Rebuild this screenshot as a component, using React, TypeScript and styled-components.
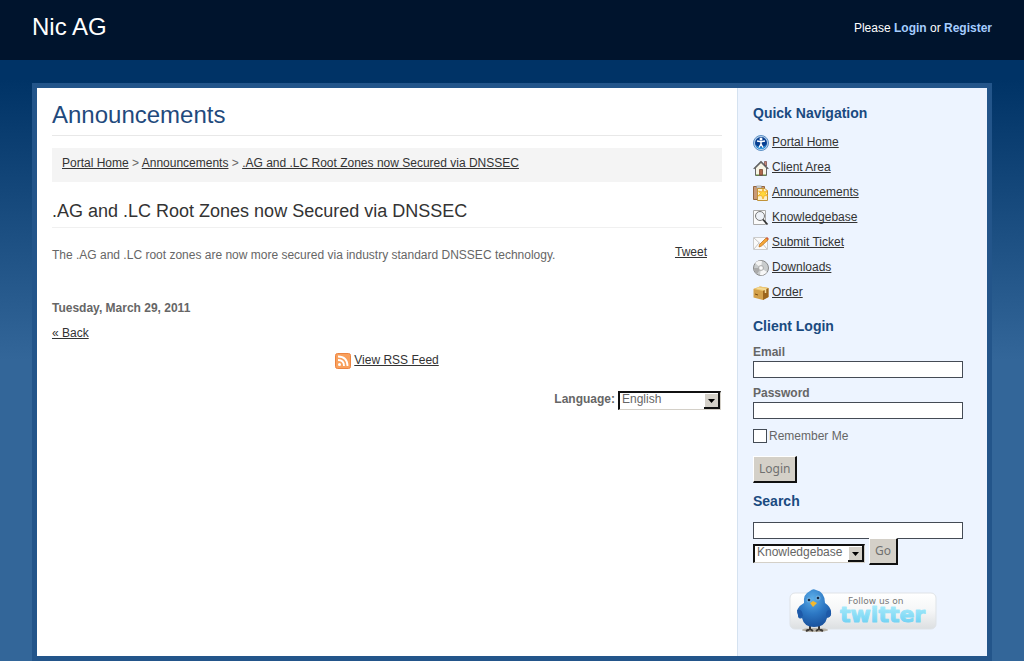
import React from 'react';
import styled, { createGlobalStyle } from 'styled-components';

const GlobalStyle = createGlobalStyle`
  * { box-sizing: border-box; }
  html { min-height: 100%; background: #336699; }
  body {
    margin: 0;
    font: 12px/18px "Liberation Sans", Arial, sans-serif;
    color: #666;
    background: linear-gradient(#003366 80px, #336699 360px) no-repeat;
  }
`;

const Header = styled.header`
  display: flex;
  justify-content: space-between;
  align-items: center;
  height: 60px;
  padding: 0 32px 4px;
  background: #00142d;
  color: #fff;
`;

const SiteName = styled.div`
  font-size: 24px;
  line-height: 30px;
  padding-bottom: 2px;
`;

const AccountLink = styled.a`
  color: #a5cdff;
  font-weight: bold;
  text-decoration: none;
`;

const Frame = styled.div`
  display: flex;
  min-height: 578px;
  margin: 23px 32px 0;
  border: 5px solid #23558a;
  background: #fff;
`;

const Main = styled.main`
  flex: 1;
  padding: 12px 15px;
`;

const Sidebar = styled.aside`
  width: 250px;
  padding: 16px 14px 16px 15px;
  background: #edf4ff;
  border-left: 1px solid #d5e2f0;
`;

const PageTitle = styled.h1`
  margin: 0 0 12px;
  padding-bottom: 5px;
  border-bottom: 1px solid #e8e8e8;
  color: #1f4a7d;
  font-size: 24px;
  line-height: 30px;
  font-weight: normal;
`;

const Breadcrumb = styled.nav`
  height: 34px;
  padding: 6px 10px;
  background: #f4f4f4;
`;

const TextLink = styled.a`
  color: #333;
  text-decoration: underline;
  text-underline-offset: 1px;
  text-decoration-skip-ink: none;
`;

const ArticleTitle = styled.h2`
  margin: 17px 0 15px;
  padding-bottom: 3px;
  border-bottom: 1px solid #f0f0f0;
  color: #333;
  font-size: 18px;
  line-height: 25px;
  font-weight: normal;
`;

const ArticleBody = styled.div`
  display: flex;
  justify-content: space-between;
  align-items: flex-start;
  padding-right: 15px;
`;

const ArticleText = styled.p`
  margin: 3px 0 35px;
`;

const DateLine = styled.p`
  margin: 0 0 7px;
  font-weight: bold;
`;

const FeedLine = styled.p`
  display: flex;
  justify-content: center;
  gap: 3px;
  margin: 9px 0 21px;
`;

const LanguageForm = styled.form`
  display: flex;
  justify-content: flex-end;
  gap: 3px;
  padding-right: 1px;
`;

const BoldLabel = styled.label`
  display: block;
  font-weight: bold;
`;

const SelectBox = styled.span<{ $width: number }>`
  position: relative;
  display: block;
  width: ${(p) => p.$width}px;
  height: 19px;
  margin-top: 1px;
  border: 1px solid #d4d0c8;
  border-top: 2px solid #111;
  border-left: 2px solid #111;
  background: #fff;
`;

const NativeSelect = styled.select`
  display: block;
  width: 100%;
  height: 13px;
  padding: 0 0 0 2px;
  border: 0;
  appearance: none;
  background: transparent;
  color: #666;
  font: inherit;
  line-height: 13px;
`;

const SelectArrow = styled.svg`
  position: absolute;
  top: 0;
  right: 0;
  pointer-events: none;
`;

const SideTitle = styled.h2`
  margin: 0;
  color: #1a4a80;
  font-size: 14px;
  line-height: 18px;
`;

const NavList = styled.ul`
  list-style: none;
  margin: 9px 0 11px;
  padding: 0;
`;

const NavItem = styled.li`
  display: flex;
  gap: 3px;
  height: 25px;
  padding-top: 2px;
  line-height: 18px;
`;

const Icon = styled.svg`
  flex: none;
  display: block;
  margin-top: 2px;
`;

const LoginForm = styled.form`
  margin: 8px 0 9px;
`;

const TextInput = styled.input`
  display: block;
  width: 210px;
  height: 17px;
  margin-bottom: 6px;
  padding: 0 2px;
  border: 1px solid #444b55;
  border-radius: 0;
  background: #fff;
  font: inherit;
`;

const CheckLabel = styled.label`
  display: flex;
  align-items: center;
  gap: 2px;
  margin: 8px 0 11px;
`;

const CheckInput = styled.input`
  appearance: none;
  width: 14px;
  height: 14px;
  margin: 0;
  border: 1px solid #444b55;
  background: #fff;

  &:checked { background: #444b55; }
`;

const PushButton = styled.button`
  height: 27px;
  padding: 0 5px;
  border: 1px solid #fff;
  border-right: 2px solid #111;
  border-bottom: 2px solid #111;
  background: #d4d0c8;
  color: #707070;
  font: 12px/20px "Noto Sans", "Open Sans", sans-serif;
`;

const SearchForm = styled.form`
  margin-top: 12px;
  ${TextInput} { margin: 0; }
`;

const SearchRow = styled.div`
  display: flex;
  align-items: flex-start;
  gap: 4px;
  ${SelectBox} { margin-top: 5px; }
  ${PushButton} { position: relative; margin-top: -1px; }
`;

const TwitterLink = styled.a`
  display: block;
  width: 150px;
  margin: 23px auto 0;
  svg { display: block; }
`;

function Select({ id, width, label, options }: { id: string; width: number; label?: string; options: string[] }) {
  return (
    <SelectBox $width={width}>
      <NativeSelect id={id} aria-label={label}>
        {options.map((o) => <option key={o}>{o}</option>)}
      </NativeSelect>
      <SelectArrow width="16" height="16" viewBox="0 0 16 16" aria-hidden="true">
        <path d="M0 0H16V16H0Z" fill="#111" />
        <path d="M0 0H14V14H0Z" fill="#fff" />
        <path d="M1 1H14V14H1Z" fill="#d4d0c8" />
        <path d="M4 6H11L7.500 10Z" fill="#000" />
      </SelectArrow>
    </SelectBox>
  );
}

const icons: Record<string, React.ReactNode> = {
  home: (
    <>
      <circle cx="8" cy="8" r="7.500" fill="#b9d2ec" stroke="#5b8fc5" />
      <circle cx="8" cy="8" r="6" fill="#083f91" />
      <path d="M3 10Q8 15 13 10Q12 14 8 14T3 10" fill="#2fa0e8" />
      <circle cx="8" cy="4" r="1.500" fill="#fff" />
      <path d="M4 6L7 6.500H9L12 6M8 6.500V9L6 12.500M8 9L10 12.500" stroke="#fff" strokeWidth="1.500" fill="none" />
    </>
  ),
  client: (
    <>
      <path d="M11.500 1.500H13.500V6H11.500Z" fill="#c98a78" stroke="#633" strokeWidth=".6" />
      <path d="M2.500 8L8 2.500L13.500 8V15.500H2.500Z" fill="#f8f5e6" stroke="#666" />
      <path d="M.7 8.800L8 1.500L15.300 8.800" fill="none" stroke="#555" strokeWidth="1.200" />
      <path d="M6.500 9.500H9.500V15H6.500Z" fill="#b0674c" stroke="#6d3925" strokeWidth=".7" />
      <path d="M3 15H6M10 15H13" stroke="#66933e" />
    </>
  ),
  news: (
    <>
      <path d="M.5 1.500H11.500V14.500H.5Z" fill="#c99a78" stroke="#94663f" />
      <path d="M3.500 1H8.500V3H3.500Z" fill="#ddd" stroke="#888" strokeWidth=".6" />
      <path d="M4.500 3.500H12L14.500 6V15.500H4.500Z" fill="#fbf0c8" stroke="#c19238" />
      <path d="M10 4L11 7L14.500 5.500L12.500 8.500L15 11L11.500 10.500L10 14L8.500 10.500L5 11L7.500 8.500L5.500 6L9 7Z" fill="#ffd83a" stroke="#f0a31c" strokeWidth=".7" />
    </>
  ),
  knowledge: (
    <>
      <path d="M.5 .5H12.500V14.500H.5Z" fill="#fbfbfb" stroke="#aaa" />
      <circle cx="7" cy="6" r="4.500" fill="#eef2f8" stroke="#777" />
      <path d="M10 9.500L14.500 14.500" stroke="#333" strokeWidth="1.800" />
    </>
  ),
  ticket: (
    <>
      <path d="M.5 2.500H14.500V14.500H.5Z" fill="#fafafa" stroke="#ccc" />
      <path d="M1 3L7.500 9L14 3M1 14L6 8M14 14L9 8" fill="none" stroke="#c5c5c5" />
      <path d="M6.500 9.500L13 3L15 5L8.500 11L6 12Z" fill="#f5a738" stroke="#b96b1b" strokeWidth=".7" />
      <path d="M13 3L14 2L16 4L15 5Z" fill="#d65a3c" />
    </>
  ),
  disc: (
    <>
      <circle cx="8" cy="8" r="7.500" fill="#c9cccd" stroke="#888" />
      <path d="M8 8L2 3Q5 0 9 1Z" fill="#f4f4f4" />
      <path d="M8 8L14 12Q11 16 7 15Z" fill="#f7f7f7" />
      <path d="M8 8L1 8Q1 12 4 14Z" fill="#aaa" />
      <circle cx="8" cy="8" r="2.500" fill="#eee" stroke="#999" strokeWidth=".7" />
      <circle cx="8" cy="8" r="1" fill="#fff" />
    </>
  ),
  order: (
    <>
      <path d="M.5 4L7 1.500L15.500 3V12L10 15L.5 12.500Z" fill="#d3a04a" />
      <path d="M.5 4L7 1.500L15.500 3L10 6Z" fill="#edc873" />
      <path d="M10 6L15.500 3V12L10 15Z" fill="#9c651c" />
      <path d="M4 3L12.500 4.500V8" stroke="#f4dc9a" strokeWidth="1.500" fill="none" />
      <path d="M2 9L5 10" stroke="#805014" />
    </>
  ),
};

const navigation = [
  ['home', 'Portal Home'],
  ['client', 'Client Area'],
  ['news', 'Announcements'],
  ['knowledge', 'Knowledgebase'],
  ['ticket', 'Submit Ticket'],
  ['disc', 'Downloads'],
  ['order', 'Order'],
];

function RssIcon() {
  return (
    <Icon width="16" height="16" viewBox="0 0 16 16" aria-hidden="true">
      <rect x=".5" y=".5" width="15" height="15" rx="2" fill="#f9a05c" stroke="#ec8340" />
      <circle cx="4.500" cy="11.500" r="1.500" fill="#fff" />
      <path d="M3 7Q9 7 9 13M3 3.500Q12.500 3.500 12.500 13" fill="none" stroke="#fff" strokeWidth="1.800" />
    </Icon>
  );
}

function TwitterBadge() {
  return (
    <svg width="150" height="46" viewBox="0 0 150 46" role="img" aria-label="Follow us on twitter">
      <defs>
        <linearGradient id="plate" x2="0" y2="1">
          <stop stopColor="#fff" />
          <stop offset=".5" stopColor="#f5f6f7" />
          <stop offset="1" stopColor="#dcdfe1" />
        </linearGradient>
        <radialGradient id="bird" cx=".45" cy=".25" r=".8">
          <stop stopColor="#5caee9" />
          <stop offset=".5" stopColor="#2d78c4" />
          <stop offset="1" stopColor="#164c98" />
        </radialGradient>
        <linearGradient id="word" x2="0" y2="1">
          <stop stopColor="#b2f0fc" />
          <stop offset="1" stopColor="#66ccf2" />
        </linearGradient>
      </defs>
      <rect x="2" y="5" width="146" height="36" rx="5" fill="url(#plate)" stroke="#dfe3e7" />
      <ellipse cx="27" cy="42" rx="13" ry="2" fill="#b9b3a8" />
      <path d="M22 37V42M31 37V42M18 43L22 41L25 43M28 43L31 41L35 43" stroke="#3d3935" strokeWidth="2" fill="none" />
      <path d="M16 15Q15 6 22 3Q25 0 28 2Q37 4 37 15Q43 19 43 24Q44 29 39 30Q37 39 26 39Q16 39 14 30Q10 32 10 27Q7 20 16 15Z" fill="url(#bird)" />
      <path d="M9 22Q14 20 15 28Q10 31 10 27ZM43 23Q38 20 38 28Q42 31 43 26Z" fill="#1d59a8" />
      <circle cx="21" cy="12" r="2.500" fill="#6fb0e0" />
      <circle cx="30" cy="10" r="2.500" fill="#6fb0e0" />
      <circle cx="21" cy="12" r="1.300" fill="#162843" />
      <circle cx="30" cy="10" r="1.300" fill="#162843" />
      <path d="M22 15L25 13L29 15L25 19Z" fill="#f3b82c" />
      <text x="60" y="16" fill="#777" fontFamily="DejaVu Sans, sans-serif" fontSize="9">Follow us on</text>
      <text x="52" y="34" fill="url(#word)" stroke="url(#word)" strokeWidth="1" strokeLinejoin="round" fontFamily="DejaVu Sans, sans-serif" fontWeight="bold" fontSize="22">twitter</text>
    </svg>
  );
}

export default function App() {
  return (
    <>
      <GlobalStyle />
      <Header>
        <SiteName>Nic AG</SiteName>
        <div>
          Please <AccountLink href="#login">Login</AccountLink> or <AccountLink href="#register">Register</AccountLink>
        </div>
      </Header>
      <Frame>
        <Main>
          <PageTitle>Announcements</PageTitle>
          <Breadcrumb>
            <TextLink href="#home">Portal Home</TextLink> &gt; <TextLink href="#announcements">Announcements</TextLink> &gt;{' '}
            <TextLink href="#dnssec">.AG and .LC Root Zones now Secured via DNSSEC</TextLink>
          </Breadcrumb>
          <ArticleTitle>.AG and .LC Root Zones now Secured via DNSSEC</ArticleTitle>
          <ArticleBody>
            <ArticleText>The .AG and .LC root zones are now more secured via industry standard DNSSEC technology.</ArticleText>
            <TextLink href="#tweet">Tweet</TextLink>
          </ArticleBody>
          <DateLine>Tuesday, March 29, 2011</DateLine>
          <TextLink href="#back">« Back</TextLink>
          <FeedLine>
            <RssIcon />
            <TextLink href="#rss">View RSS Feed</TextLink>
          </FeedLine>
          <LanguageForm>
            <BoldLabel htmlFor="language">Language:</BoldLabel>
            <Select id="language" width={103} options={['English']} />
          </LanguageForm>
        </Main>
        <Sidebar>
          <SideTitle>Quick Navigation</SideTitle>
          <NavList>
            {navigation.map(([icon, label]) => (
              <NavItem key={icon}>
                <Icon width="16" height="16" viewBox="0 0 16 16" aria-hidden="true">{icons[icon]}</Icon>
                <TextLink href={'#' + icon}>{label}</TextLink>
              </NavItem>
            ))}
          </NavList>
          <SideTitle>Client Login</SideTitle>
          <LoginForm>
            <BoldLabel htmlFor="email">Email</BoldLabel>
            <TextInput id="email" type="text" />
            <BoldLabel htmlFor="password">Password</BoldLabel>
            <TextInput id="password" type="password" />
            <CheckLabel><CheckInput type="checkbox" />Remember Me</CheckLabel>
            <PushButton type="button">Login</PushButton>
          </LoginForm>
          <SideTitle>Search</SideTitle>
          <SearchForm>
            <TextInput type="text" aria-label="Search" />
            <SearchRow>
              <Select id="area" label="Search in" width={112} options={['Knowledgebase', 'Downloads']} />
              <PushButton type="button">Go</PushButton>
            </SearchRow>
          </SearchForm>
          <TwitterLink href="#twitter"><TwitterBadge /></TwitterLink>
        </Sidebar>
      </Frame>
    </>
  );
}
